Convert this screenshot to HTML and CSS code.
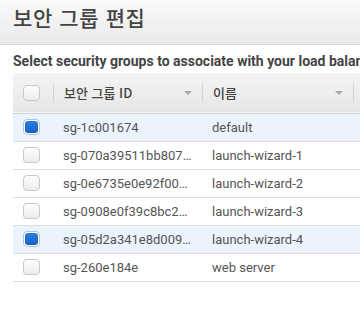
FILE: index.html
```html
<!DOCTYPE html>
<html lang="ko">
<head>
<meta charset="utf-8">
<link rel="stylesheet" href="styles.css">
</head>
<body>
<div class="modal-head"><h1 class="title">보안 그룹 편집</h1></div>
<div class="content">
  <p class="lead">Select security groups to associate with your load balancer</p>
  <table class="grid">
    <colgroup><col class="c-check"><col class="c-id"><col class="c-name"><col class="c-desc"></colgroup>
    <thead>
      <tr>
        <th class="cell-check"><span class="cb"></span></th>
        <th><div class="th-in"><span class="th-label">보안 그룹 ID</span><span class="arrow"></span></div></th>
        <th><div class="th-in"><span class="th-label">이름</span><span class="arrow"></span></div></th>
        <th><div class="th-in"><span class="th-label">설명</span><span class="arrow"></span></div></th>
      </tr>
    </thead>
    <tbody>
      <tr class="sel"><td class="cell-check"><span class="cb on"></span></td><td><div class="tx">sg-1c001674</div></td><td><div class="tx">default</div></td><td><div class="tx">default VPC security group</div></td></tr>
      <tr><td class="cell-check"><span class="cb"></span></td><td><div class="tx">sg-070a39511bb807a21</div></td><td><div class="tx">launch-wizard-1</div></td><td><div class="tx">launch-wizard-1</div></td></tr>
      <tr><td class="cell-check"><span class="cb"></span></td><td><div class="tx">sg-0e6735e0e92f00c14</div></td><td><div class="tx">launch-wizard-2</div></td><td><div class="tx">launch-wizard-2</div></td></tr>
      <tr><td class="cell-check"><span class="cb"></span></td><td><div class="tx">sg-0908e0f39c8bc2a17</div></td><td><div class="tx">launch-wizard-3</div></td><td><div class="tx">launch-wizard-3</div></td></tr>
      <tr class="sel"><td class="cell-check"><span class="cb on"></span></td><td><div class="tx">sg-05d2a341e8d009b3e</div></td><td><div class="tx">launch-wizard-4</div></td><td><div class="tx">launch-wizard-4</div></td></tr>
      <tr><td class="cell-check"><span class="cb"></span></td><td><div class="tx">sg-260e184e</div></td><td><div class="tx">web server</div></td><td><div class="tx">web server</div></td></tr>
    </tbody>
  </table>
</div>
</body>
</html>
```
FILE: styles.css
```css
html, body {
  margin: 0;
  padding: 0;
  background: #fff;
  overflow: hidden;
}
body {
  width: 360px;
  height: 317px;
  font-family: Roboto, "Noto Sans CJK KR", sans-serif;
  color: #444;
}
.modal-head {
  height: 44px;
  border-bottom: 1px solid #d5d5d5;
  background: linear-gradient(#fafafa, #e9e9e9);
  padding: 0 13px;
}
.title {
  margin: 0;
  font-family: "Noto Sans CJK KR", sans-serif;
  font-weight: 500;
  font-size: 21px;
  line-height: 34px;
  color: #444;
  letter-spacing: 0.6px;
}
.content {
  padding: 8px 0 0 13px;
}
.lead {
  margin: 0 0 3px;
  font-weight: 700;
  font-size: 14px;
  line-height: 17px;
  color: #444;
  white-space: nowrap;
}
.grid {
  border-collapse: collapse;
  table-layout: fixed;
  width: 560px;
}
.c-check { width: 40px; }
.c-id { width: 149px; }
.c-name { width: 151px; }
.c-desc { width: 220px; }
thead tr {
  height: 40px;
  background: linear-gradient(#f4f4f4, #e7e7e7);
  border-bottom: 1px solid #d2d2d2;
}
th {
  padding: 0;
  font-weight: 400;
  text-align: left;
  font-size: 13px;
  color: #444;
}
.th-in {
  display: flex;
  align-items: center;
  height: 19px;
  border-left: 1px solid #d4d4d4;
  padding: 0 10px;
}
.th-label {
  flex: 1;
  font-family: "Noto Sans CJK KR", Roboto, sans-serif;
  font-weight: 500;
  white-space: nowrap;
  overflow: hidden;
}
.arrow {
  width: 0;
  height: 0;
  border-left: 4px solid transparent;
  border-right: 4px solid transparent;
  border-top: 4px solid #a9a9a9;
}
.cell-check {
  padding: 0 0 0 10px;
}
.cb {
  display: block;
  box-sizing: border-box;
  width: 17px;
  height: 16px;
  border: 1px solid #c8c8c8;
  border-radius: 4px;
  background: linear-gradient(#fdfdfd, #ececec);
}
.cb.on {
  border-color: #b9c3cf;
  background: #fff;
  position: relative;
}
.cb.on::after {
  content: "";
  position: absolute;
  left: 1px;
  top: 1px;
  right: 1px;
  bottom: 1px;
  border-radius: 3px;
  background: linear-gradient(#2e80e2, #1660c0);
}
tbody tr {
  height: 28px;
  border-bottom: 1px solid #dedede;
}
tbody tr.sel {
  background: #eaf3fe;
}
td {
  padding: 0;
  font-size: 13px;
  color: #555;
}
.tx {
  padding: 0 8px 0 10px;
  white-space: nowrap;
  overflow: hidden;
  text-overflow: ellipsis;
}
```
